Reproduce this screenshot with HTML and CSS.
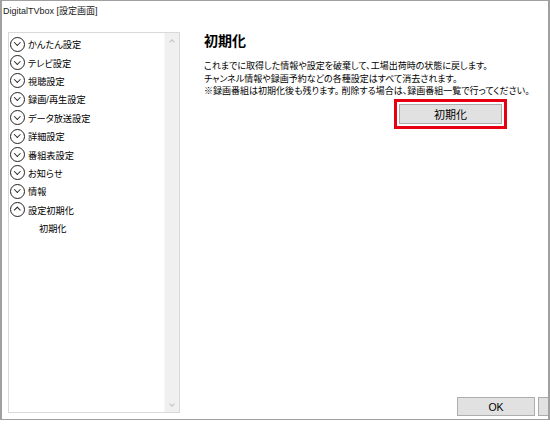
FILE: index.html
```html
<!DOCTYPE html>
<html lang="ja">

<head>
    <meta charset="UTF-8">
    <meta name="viewport" content="width=device-width, initial-scale=1.0">
    <title>DigitalTVbox [設定画面]</title>
    <link rel="stylesheet" href="styles.css">
</head>

<body>
    <div class="window">
        <div class="titlebar">DigitalTVbox [設定画面]</div>
        <div class="main">
            <div class="nav">
                <ul class="tree">
                    <li class="node"><span class="toggle"></span>かんたん設定</li>
                    <li class="node"><span class="toggle"></span>テレビ設定</li>
                    <li class="node"><span class="toggle"></span>視聴設定</li>
                    <li class="node"><span class="toggle"></span>録画/再生設定</li>
                    <li class="node"><span class="toggle"></span>データ放送設定</li>
                    <li class="node"><span class="toggle"></span>詳細設定</li>
                    <li class="node"><span class="toggle"></span>番組表設定</li>
                    <li class="node"><span class="toggle"></span>お知らせ</li>
                    <li class="node"><span class="toggle"></span>情報</li>
                    <li class="node open"><span class="toggle"></span>設定初期化</li>
                    <li class="leaf">初期化</li>
                </ul>
                <div class="scrollbar">
                    <span class="arrow up"></span>
                    <span class="arrow down"></span>
                </div>
            </div>
            <div class="panel">
                <div class="content">
                    <h1>初期化</h1>
                    <p>これまでに取得した情報や設定を破棄して、工場出荷時の状態に戻します。<br>
                        チャンネル情報や録画予約などの各種設定はすべて消去されます。<br>
                        ※録画番組は初期化後も残ります。 削除する場合は、録画番組一覧で行ってください。</p>
                    <div class="action">
                        <div class="mark">
                            <button class="btn reset">初期化</button>
                        </div>
                    </div>
                </div>
                <div class="footer">
                    <button class="btn">OK</button>
                    <button class="btn"></button>
                </div>
            </div>
        </div>
    </div>
</body>

</html>
```

FILE: styles.css
```css
* {
    box-sizing: border-box;
}

body {
    margin: 0;
    background-color: #fff;
    font-family: "Liberation Sans", "Noto Sans CJK JP", sans-serif;
    font-size: 9px;
    color: #000;
    font-feature-settings: "palt";
}

.window {
    width: 550px;
    height: 420px;
    border: 1px solid #a0a0a0;
    border-left-width: 2px;
    border-right-width: 2px;
    background-color: #fff;
    overflow: hidden;
    display: flex;
    flex-direction: column;
}

.titlebar {
    height: 21px;
    padding: 3px 0 0 1px;
    font-size: 9px;
    color: #1a1a1a;
}

.main {
    flex: 1;
    display: flex;
    padding: 10px 0 6px 6px;
    min-height: 0;
}

/* tree list on the left */
.nav {
    width: 172px;
    border: 1px solid #d9d9d9;
    display: flex;
}

.tree {
    flex: 1;
    list-style: none;
    margin: 0;
    padding: 2px 0 0 1px;
}

.tree li {
    height: 18.4px;
    display: flex;
    align-items: center;
    white-space: nowrap;
    font-size: 9.2px;
}

.tree .leaf {
    padding-left: 29px;
}

.toggle {
    width: 15px;
    height: 15px;
    border: 1.3px solid #222;
    border-radius: 50%;
    margin-right: 3px;
    position: relative;
    flex-shrink: 0;
}

.toggle::after {
    content: "";
    position: absolute;
    left: 4.2px;
    top: 2.6px;
    width: 3.6px;
    height: 3.6px;
    border-right: 1.6px solid #222;
    border-bottom: 1.6px solid #222;
    transform: rotate(45deg);
}

.open .toggle::after {
    top: 4.8px;
    transform: rotate(-135deg);
}

.scrollbar {
    width: 15px;
    background-color: #f0f0f0;
    border-left: 1px solid #f7f7f7;
    display: flex;
    flex-direction: column;
    justify-content: space-between;
    align-items: center;
    padding: 7px 0 6px;
}

.arrow {
    width: 4px;
    height: 4px;
    border-right: 1px solid #c2c2c2;
    border-bottom: 1px solid #c2c2c2;
}

.arrow.up {
    transform: rotate(-135deg);
}

.arrow.down {
    transform: rotate(45deg);
}

/* right side */
.panel {
    flex: 1;
    display: flex;
    flex-direction: column;
    min-width: 0;
}

.content {
    flex: 1;
    padding: 0 0 0 24px;
}

h1 {
    margin: 0;
    font-size: 14px;
    line-height: 18px;
    font-weight: bold;
}

p {
    margin: 10px 0 0;
    line-height: 12.5px;
}

.action {
    display: flex;
    justify-content: flex-end;
    padding-right: 41px;
    margin-top: 1px;
}

.mark {
    border: 3px solid #e60012;
    padding: 2px;
}

.btn {
    font-family: inherit;
    font-feature-settings: "palt";
    background-color: #e1e1e1;
    border: 1px solid #adadad;
    color: #000;
    padding: 0;
    margin: 0;
}

.reset {
    width: 103px;
    height: 20px;
    font-size: 11px;
}

.footer {
    display: flex;
    gap: 3px;
    padding-left: 277px;
    margin-bottom: -3px;
    overflow: hidden;
}

.footer .btn {
    width: 78px;
    height: 19px;
    font-size: 10.5px;
    flex-shrink: 0;
}
```
